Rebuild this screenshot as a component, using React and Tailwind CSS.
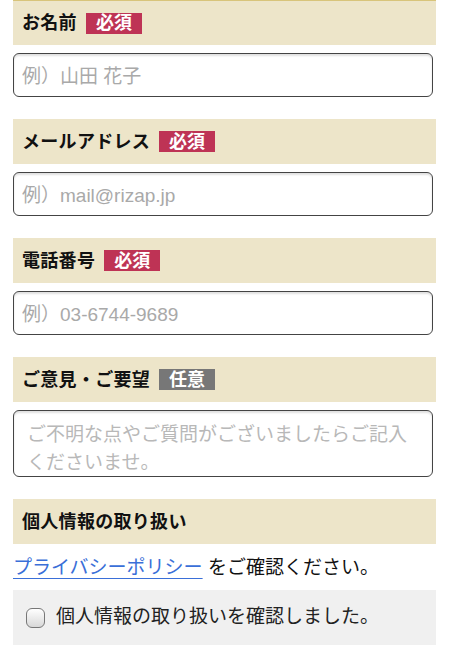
import React from "react";

const font = { fontFamily: '"Liberation Sans", "Noto Sans CJK JP", sans-serif' };

function Badge({ optional }) {
  return (
    <span
      className={`ml-[9px] inline-flex h-[21px] items-center px-[10px] text-[18px] font-bold leading-none text-white ${
        optional ? "bg-[#777777]" : "bg-[#be3355]"
      }`}
    >
      {optional ? "任意" : "必須"}
    </span>
  );
}

function Heading({ label, badge, optional, first }) {
  return (
    <div
      className={`flex h-[45px] items-center bg-[#ede5c9] pl-[9px] ${
        first ? "border-t border-[#d8c47a]" : ""
      }`}
    >
      <span className="text-[18px] font-bold leading-none tracking-[0.3px] text-[#111]">{label}</span>
      {badge && <Badge optional={optional} />}
    </div>
  );
}

function Field({ label, placeholder, first }) {
  return (
    <div className="mb-[22px]">
      <Heading label={label} badge first={first} />
      <input
        type="text"
        placeholder={placeholder}
        className="mt-[8px] block h-[44px] w-[420px] rounded-[6px] border border-[#444] bg-white px-[8px] pt-[3px] text-[19px] shadow-[inset_0_2px_2px_rgba(0,0,0,0.12)] outline-none placeholder:text-[#a9a9a9]"
        style={font}
      />
    </div>
  );
}

export default function App() {
  return (
    <div className="min-h-[657px] bg-white px-[13px]" style={font}>
      <Field label="お名前" placeholder="例）山田 花子" first />
      <Field label="メールアドレス" placeholder="例）mail@rizap.jp" />
      <Field label="電話番号" placeholder="例）03-6744-9689" />

      <div className="mb-[22px]">
        <Heading label="ご意見・ご要望" badge optional />
        <textarea
          placeholder={"ご不明な点やご質問がございましたらご記入\nくださいませ。"}
          className="mt-[8px] block h-[67px] w-[420px] resize-none overflow-hidden rounded-[6px] border border-[#444] bg-white px-[13px] pt-[10px] text-[19px] leading-[28px] shadow-[inset_0_2px_2px_rgba(0,0,0,0.12)] outline-none placeholder:text-[#b8b8b8]"
          style={font}
        />
      </div>

      <Heading label="個人情報の取り扱い" />
      <p className="mt-[11px] text-[19px] leading-[26px] text-[#111]">
        <a href="#" className="text-[#3a6fd8] underline underline-offset-[4px]">
          プライバシーポリシー
        </a>{" "}
        をご確認ください。
      </p>
      <label className="mt-[9px] flex h-[55px] items-center bg-[#f0f0f0] pl-[13px]">
        <span className="h-[20px] w-[19px] shrink-0 rounded-[6px] border border-[#777] bg-gradient-to-b from-white to-[#d8d8d8]" />
        <span className="ml-[11px] text-[19px] text-[#222]">
          個人情報の取り扱いを確認しました。
        </span>
      </label>
    </div>
  );
}
